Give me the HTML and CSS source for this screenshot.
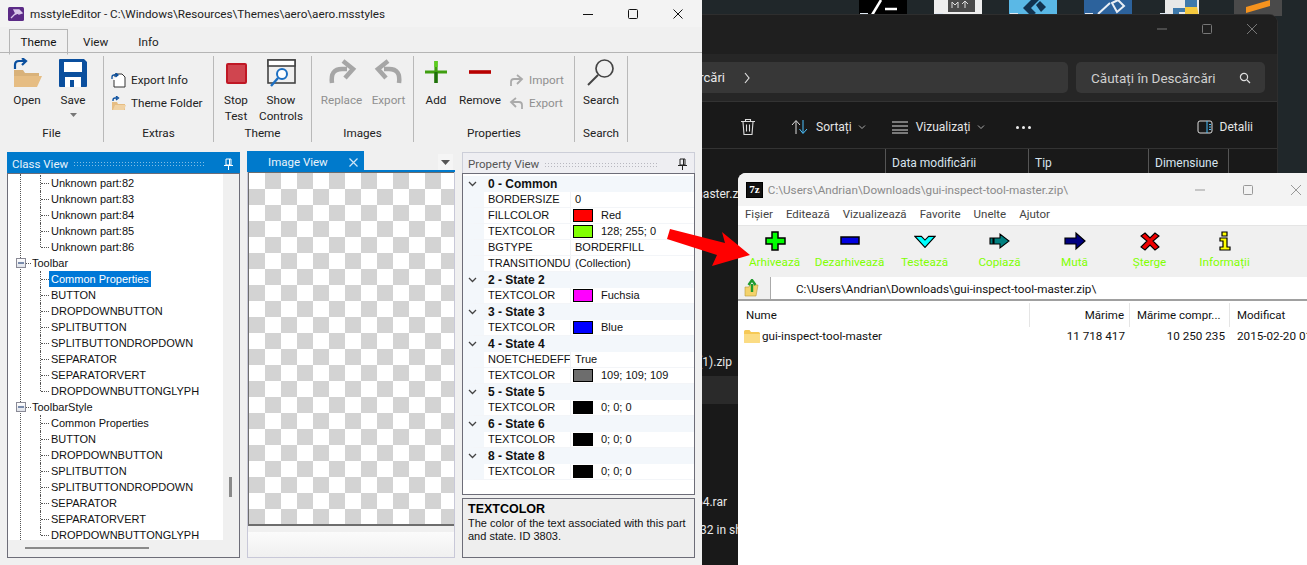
FILE: index.html
```html
<!DOCTYPE html>
<html lang="ro">
<head>
<meta charset="utf-8">
<title>msstyleEditor</title>
<link rel="stylesheet" href="styles.css">
</head>
<body>
<div class="desktop">
  <div class="shortcuts">
    <svg class="tile" viewBox="0 0 48 16"><rect width="48" height="16" fill="#000"/><path d="M13 15 22 0" stroke="#fff" stroke-width="2.500"/><path d="M26 9h12" stroke="#fff" stroke-width="2.500"/><rect x="1" y="13" width="8" height="3" fill="#dfe8f2"/></svg>
    <svg class="tile" viewBox="0 0 48 16"><rect width="48" height="16" fill="#eee"/><rect x="14" y="0" width="27" height="12" fill="#4a4a4a"/><path d="M18 8V2l3 3 3-3v6M31 8V2M28 4l3-3 3 3" stroke="#ddd" fill="none"/><rect x="1" y="13" width="8" height="3" fill="#dfe8f2"/></svg>
    <svg class="tile" viewBox="0 0 48 16"><rect width="48" height="16" fill="#5ab8e6"/><path d="M14 8l8-8h8l-8 8 5 5-5 3z" fill="#12324e"/><path d="M27 5l4-4 6 6-5 5z" fill="#12324e"/><rect x="1" y="13" width="8" height="3" fill="#dfe8f2"/></svg>
    <svg class="tile" viewBox="0 0 48 16"><rect width="48" height="16" fill="#2c629c"/><path d="M14 14 26 3M28 3l6-3 6 6-7 6z" stroke="#e8eef5" stroke-width="2" fill="none"/><rect x="1" y="13" width="8" height="3" fill="#dfe8f2"/></svg>
    <svg class="tile" viewBox="0 0 48 16"><rect x="6" width="34" height="16" fill="#e8e8e8"/><path d="M14 16V8h12V0h12v8l-4 4H20v4z" fill="#3e79ab"/><path d="M26 16h14l-2-9H26z" fill="#f5c93e"/><rect x="1" y="13" width="8" height="3" fill="#dfe8f2"/></svg>
    <svg class="tile" viewBox="0 0 48 16"><rect width="48" height="16" fill="#4a4a4a"/><path d="M12 7 36 0v6L12 13z" fill="#f5931e"/><path d="M12 14h18v2H12z" fill="#f5931e"/></svg>
  </div>

  <section class="explorer">
    <div class="ex-title">
      <svg class="ex-ctl" viewBox="0 0 12 12"><path d="M1 6h10" stroke="#777"/></svg>
      <svg class="ex-ctl" viewBox="0 0 12 12"><rect x="1.500" y="1.500" width="9" height="9" rx="1" fill="none" stroke="#777"/></svg>
      <svg class="ex-ctl" viewBox="0 0 12 12"><path d="M1 1l10 10M11 1 1 11" stroke="#777"/></svg>
    </div>
    <div class="ex-address">
      <div class="ex-path"><span>Descărcări</span><svg class="ex-chev" viewBox="0 0 8 12"><path d="M2 1l4 5-4 5" stroke="#ddd" fill="none" stroke-width="1.200"/></svg></div>
      <div class="ex-search"><span>Căutați în Descărcări</span><svg class="ex-glass" viewBox="0 0 12 12"><circle cx="5" cy="5" r="3.600" fill="none" stroke="#ddd" stroke-width="1.200"/><path d="M8 8l3 3" stroke="#ddd" stroke-width="1.300"/></svg></div>
    </div>
    <div class="ex-tools">
      <svg class="ex-trash" viewBox="0 0 16 18"><path d="M1 3.500h14M5.500 3V1.500h5V3M3 4l1 12.500h8L13 4M6.500 6.500v7M9.500 6.500v7" stroke="#ddd" fill="none" stroke-width="1.100"/></svg>
      <span class="ex-sep"></span>
      <svg class="ex-ico" viewBox="0 0 18 16"><path d="M5 15V2M1 6l4-4.500L9 6" stroke="#ddd" fill="none"/><path d="M12 1v13M8.500 10l3.500 4.500L16 10" stroke="#4cc2ff" fill="none"/></svg>
      <span class="ex-label">Sortați</span><svg class="ex-small" viewBox="0 0 8 6"><path d="M1 1.500l3 3 3-3" stroke="#aaa" fill="none"/></svg>
      <svg class="ex-ico ex-ico-view" viewBox="0 0 18 14"><path d="M1 2h16M1 6h16M1 10h16M1 13h16" stroke="#ddd"/></svg>
      <span class="ex-label">Vizualizați</span><svg class="ex-small" viewBox="0 0 8 6"><path d="M1 1.500l3 3 3-3" stroke="#aaa" fill="none"/></svg>
      <span class="ex-sep ex-sep-2"></span>
      <span class="ex-dots"><i></i><i></i><i></i></span>
      <svg class="ex-ico ex-ico-det" viewBox="0 0 16 14"><rect x="1" y="1" width="14" height="12" rx="2" fill="none" stroke="#ddd"/><path d="M10 1v12M12 4.500h2M12 7h2M12 9.500h2" stroke="#4cc2ff"/></svg>
      <span class="ex-label">Detalii</span>
    </div>
    <div class="ex-head">
      <span class="ex-col ex-col-date">Data modificării</span>
      <span class="ex-col ex-col-type">Tip</span>
      <span class="ex-col ex-col-size">Dimensiune</span>
      <span class="ex-col ex-col-end"></span>
    </div>
    <div class="ex-files">
      <div class="file end-far">gui-inspect-tool-master.zip</div>
      <div class="file"></div><div class="file"></div><div class="file"></div><div class="file"></div><div class="file"></div>
      <div class="file end-a">gui-inspect-tool-master (1).zip</div>
      <div class="file file-sel"></div>
      <div class="file"></div><div class="file"></div><div class="file"></div>
      <div class="file end-b">winrar-x64.rar</div>
      <div class="file end-c">Microsoft Visual C++ 32 in shell</div>
    </div>
  </section>

  <section class="zip">
    <header class="zip-title">
      <span class="zip-logo">7z</span>
      <span class="zip-name">C:\Users\Andrian\Downloads\gui-inspect-tool-master.zip\</span>
      <svg class="zip-ctl" viewBox="0 0 12 12"><path d="M1 6h10" stroke="#999"/></svg>
      <svg class="zip-ctl" viewBox="0 0 12 12"><rect x="1.500" y="1.500" width="9" height="9" rx="1" fill="none" stroke="#999"/></svg>
      <svg class="zip-ctl" viewBox="0 0 12 12"><path d="M1 1l10 10M11 1 1 11" stroke="#999"/></svg>
    </header>
    <nav class="zip-menu"><span>Fișier</span><span>Editează</span><span>Vizualizează</span><span>Favorite</span><span>Unelte</span><span>Ajutor</span></nav>
    <div class="zip-tools">
      <div class="zbtn"><svg class="zicon" viewBox="0 0 22 20"><path d="M8 1h6v6h7v6h-7v6H8v-6H2V7h6z" fill="#00ff00" stroke="#000" stroke-width="1.500"/></svg><span>Arhivează</span></div>
      <div class="zbtn"><svg class="zicon" viewBox="0 0 22 20"><rect x="2" y="6" width="18" height="7" fill="#0000e0" stroke="#000" stroke-width="1.500"/></svg><span>Dezarhivează</span></div>
      <div class="zbtn"><svg class="zicon" viewBox="0 0 24 20"><path d="M1 5h7l4 4 4-4h7L12 17z" fill="#00ffff" stroke="#000" stroke-width="1.200"/></svg><span>Testează</span></div>
      <div class="zbtn"><svg class="zicon" viewBox="0 0 22 20"><path d="M1 7h3v6H1zM5 7h6V3l9 7-9 7v-4H5z" fill="#008080" stroke="#000" stroke-width="1.100"/></svg><span>Copiază</span></div>
      <div class="zbtn"><svg class="zicon" viewBox="0 0 22 20"><path d="M1 7h11V2l9 8-9 8v-5H1z" fill="#000080" stroke="#000" stroke-width="1.200"/></svg><span>Mută</span></div>
      <div class="zbtn"><svg class="zicon" viewBox="0 0 22 20"><path d="M6 2l5 5 5-5 4 3-6 5 6 6-4 3-5-5-5 5-4-3 6-6-6-5z" fill="#f00000" stroke="#000" stroke-width="1.100"/></svg><span>Șterge</span></div>
      <div class="zbtn"><svg class="zicon" viewBox="0 0 22 20"><path d="M8 1h5v4H8zM6 7h7v9h3v3H6v-3h3v-6H6z" fill="#ffff00" stroke="#000" stroke-width="1.200"/></svg><span>Informații</span></div>
    </div>
    <div class="zip-addr">
      <svg class="zip-up" viewBox="0 0 16 18"><path d="M1 8h4l1-2h8l-2 11H1z" fill="#f3d26b" stroke="#b89a3a" stroke-width=".6"/><path d="M8 13V5M4.500 6 8 1l3.500 5" stroke="#1f9a2e" stroke-width="2.400" fill="none"/></svg>
      <div class="zip-field">C:\Users\Andrian\Downloads\gui-inspect-tool-master.zip\</div>
    </div>
    <div class="zip-head">
      <span class="zc zc-name">Nume</span>
      <span class="zc zc-size">Mărime</span>
      <span class="zc zc-comp">Mărime compr...</span>
      <span class="zc zc-date">Modificat</span>
    </div>
    <div class="zip-row">
      <span class="zr-name"><svg class="zr-folder" viewBox="0 0 16 14"><path d="M0 2.500Q0 1 1.500 1h4L7 3h7.500Q16 3 16 4.500v8Q16 14 14.500 14h-13Q0 14 0 12.500z" fill="#f6c956"/><path d="M0 5h16v7.500Q16 14 14.500 14h-13Q0 14 0 12.500z" fill="#fbdc84"/></svg>gui-inspect-tool-master</span>
      <span class="zr-size">11 718 417</span>
      <span class="zr-comp">10 250 235</span>
      <span class="zr-date">2015-02-20 01:37</span>
    </div>
  </section>

  <section class="editor">
    <header class="ed-title">
      <svg class="ed-logo" viewBox="0 0 16 14"><rect width="16" height="14" rx="1.500" fill="#5b2a86"/><path d="M3 11 8 6M6 3h5l3 3-3 1-2-1-1 1z" stroke="#d9c8ea" fill="#d9c8ea" stroke-width="1.300"/></svg>
      <span class="ed-name">msstyleEditor - C:\Windows\Resources\Themes\aero\aero.msstyles</span>
      <svg class="ed-ctl" viewBox="0 0 12 12"><path d="M1 6.500h10" stroke="#111"/></svg>
      <svg class="ed-ctl" viewBox="0 0 12 12"><rect x="1.500" y="1.500" width="9" height="9" rx="1" fill="none" stroke="#111"/></svg>
      <svg class="ed-ctl" viewBox="0 0 12 12"><path d="M1.500 1.500l9 9M10.500 1.500l-9 9" stroke="#111"/></svg>
    </header>
    <nav class="rb-tabs"><span class="rb-tab rb-tab-on">Theme</span><span class="rb-tab">View</span><span class="rb-tab">Info</span></nav>
    <div class="ribbon">
      <div class="group g-file">
        <div class="group-items">
          <div class="big b-open"><svg class="bi" viewBox="0 0 30 30"><path d="M2 12h9l2 3h14v4H2z" fill="#d9b27a"/><path d="M2 29V18h28l-5 11z" fill="#e6bd83"/><path d="M3 11V7q0-4 4-4h6M10 0l4 3-4 4" stroke="#0a4f9e" stroke-width="2.200" fill="none"/></svg><span>Open</span></div>
          <div class="big b-save"><svg class="bi" viewBox="0 0 30 30"><path d="M1 2q0-1 1-1h24l3 3v24q0 1-1 1H2q-1 0-1-1z" fill="#0a4f9e"/><rect x="6" y="4" width="18" height="10" fill="#fff"/><rect x="7" y="19" width="16" height="10" fill="#fff"/><rect x="12" y="22" width="4" height="7" fill="#0a4f9e"/></svg><span>Save</span><svg class="caret" viewBox="0 0 7 4"><path d="M0 0h7L3.500 4z" fill="#777"/></svg></div>
        </div>
        <div class="group-title">File</div>
      </div>
      <div class="group g-extras">
        <div class="group-items">
          <div class="small-stack">
            <div class="small"><svg class="si" viewBox="0 0 15 15"><path d="M4 4V1h7l3 3v10H3V7" stroke="#333" fill="#fff"/><path d="M1 6V4q0-2 2-2h3M4.500 0 7 2 4.500 4" stroke="#0a4f9e" stroke-width="1.300" fill="none"/></svg>Export Info</div>
            <div class="small"><svg class="si" viewBox="0 0 15 15"><path d="M1 6h5l1 2h7v6H1z" fill="#e6bd83"/><path d="M2 14l2-5h11l-2 5z" fill="#f0d2a4"/><path d="M2 5V4q0-2 2-2h2M5 0l2.500 2L5 4" stroke="#0a4f9e" stroke-width="1.300" fill="none"/></svg>Theme Folder</div>
          </div>
        </div>
        <div class="group-title">Extras</div>
      </div>
      <div class="group g-theme">
        <div class="group-items">
          <div class="big b-stop"><svg class="bi" viewBox="0 0 30 30"><rect x="6" y="6" width="19" height="19" rx="1" fill="#d0454f" stroke="#c01825" stroke-width="2"/></svg><span>Stop<br>Test</span></div>
          <div class="big b-show"><svg class="bi" viewBox="0 0 30 30"><rect x="2" y="2" width="27" height="23" fill="#f0f0f0" stroke="#444" stroke-width="1.600"/><rect x="2" y="2" width="27" height="6" fill="#fff" stroke="#444" stroke-width="1.600"/><circle cx="16" cy="16" r="5" fill="#fff" stroke="#1c6fc2" stroke-width="2"/><path d="M12 20l-7 8" stroke="#1c6fc2" stroke-width="2.400"/></svg><span>Show<br>Controls</span></div>
        </div>
        <div class="group-title">Theme</div>
      </div>
      <div class="group g-images">
        <div class="group-items">
          <div class="big b-replace off"><svg class="bi" viewBox="0 0 30 30"><path d="M5 25q-2-14 10-14h5M16 3l10 8-8 9" stroke="#a6a6a6" stroke-width="4.500" fill="none"/></svg><span>Replace</span></div>
          <div class="big b-export off"><svg class="bi" viewBox="0 0 30 30"><path d="M25 25q2-14-10-14h-5M14 3 4 11l8 9" stroke="#a6a6a6" stroke-width="4.500" fill="none"/></svg><span>Export</span></div>
        </div>
        <div class="group-title">Images</div>
      </div>
      <div class="group g-props">
        <div class="group-items">
          <div class="big b-add"><svg class="bi" viewBox="0 0 30 30"><path d="M4 14h22M15 3v22" stroke="#3f9e10" stroke-width="3.200"/><path d="M15 14v11" stroke="#1f6f0c" stroke-width="3.200"/><path d="M15 3v6" stroke="#5ccf1c" stroke-width="3.200"/></svg><span>Add</span></div>
          <div class="big b-remove"><svg class="bi" viewBox="0 0 30 30"><path d="M4 14h22" stroke="#b80000" stroke-width="3.600"/></svg><span>Remove</span></div>
          <div class="small-stack off">
            <div class="small"><svg class="si si-g" viewBox="0 0 15 15"><path d="M2 13V9q0-3 3-3h8M8 2l5 4-5 5" stroke="#aaa" stroke-width="1.800" fill="none"/></svg>Import</div>
            <div class="small"><svg class="si si-g" viewBox="0 0 15 15"><path d="M13 13V9q0-3-3-3H3M7 2 2 6l5 5" stroke="#aaa" stroke-width="1.800" fill="none"/></svg>Export</div>
          </div>
        </div>
        <div class="group-title">Properties</div>
      </div>
      <div class="group g-search">
        <div class="group-items">
          <div class="big b-search"><svg class="bi" viewBox="0 0 30 30"><circle cx="18.500" cy="10.500" r="8.500" fill="none" stroke="#444" stroke-width="1.700"/><path d="M12 17 2 27" stroke="#444" stroke-width="2"/></svg><span>Search</span></div>
        </div>
        <div class="group-title">Search</div>
      </div>
    </div>

    <div class="workspace">
      <div class="pane pane-class">
        <div class="pane-head head-on"><span>Class View</span><i class="grip"></i><svg class="pin" viewBox="0 0 9 12"><path d="M2 1h5v6H2zM0 7.500h9M4.500 8v4M5.500 1v6" stroke="#fff" fill="none"/></svg></div>
        <div class="pane-body class-body">
          <div class="tree">
            <div class="t-leaf">Unknown part:82</div>
            <div class="t-leaf">Unknown part:83</div>
            <div class="t-leaf">Unknown part:84</div>
            <div class="t-leaf">Unknown part:85</div>
            <div class="t-leaf t-last">Unknown part:86</div>
            <div class="t-root"><i class="box"></i>Toolbar</div>
            <div class="t-leaf"><span class="t-sel">Common Properties</span></div>
            <div class="t-leaf">BUTTON</div>
            <div class="t-leaf">DROPDOWNBUTTON</div>
            <div class="t-leaf">SPLITBUTTON</div>
            <div class="t-leaf">SPLITBUTTONDROPDOWN</div>
            <div class="t-leaf">SEPARATOR</div>
            <div class="t-leaf">SEPARATORVERT</div>
            <div class="t-leaf t-last">DROPDOWNBUTTONGLYPH</div>
            <div class="t-root"><i class="box"></i>ToolbarStyle</div>
            <div class="t-leaf">Common Properties</div>
            <div class="t-leaf">BUTTON</div>
            <div class="t-leaf">DROPDOWNBUTTON</div>
            <div class="t-leaf">SPLITBUTTON</div>
            <div class="t-leaf">SPLITBUTTONDROPDOWN</div>
            <div class="t-leaf">SEPARATOR</div>
            <div class="t-leaf">SEPARATORVERT</div>
            <div class="t-leaf t-last">DROPDOWNBUTTONGLYPH</div>
          </div>
          <div class="vbar"><i class="vthumb"></i></div>
          <div class="hbar"><i class="hthumb"></i></div>
        </div>
      </div>

      <div class="pane pane-image">
        <div class="doc-tabs">
          <span class="doc-tab">Image View<svg class="doc-x" viewBox="0 0 9 9"><path d="M.5.500l8 8M8.500.500l-8 8" stroke="#cfe6f7" stroke-width="1.200"/></svg></span>
          <span class="doc-drop"><svg viewBox="0 0 9 5"><path d="M0 0h9L4.500 5z" fill="#555"/></svg></span>
        </div>
        <div class="doc-frame">
          <div class="checker"></div>
          <div class="doc-foot"></div>
        </div>
      </div>

      <div class="pane pane-prop">
        <div class="pane-head head-off"><span>Property View</span><i class="grip"></i><svg class="pin" viewBox="0 0 9 12"><path d="M2 1h5v6H2zM0 7.500h9M4.500 8v4M5.500 1v6" stroke="#222" fill="none"/></svg></div>
        <div class="pane-body prop-grid">
          <div class="p-group"><svg class="p-chev" viewBox="0 0 9 6"><path d="M1 1l3.500 3.500L8 1" stroke="#444" stroke-width="1.300" fill="none"/></svg>0 - Common</div>
          <div class="p-row"><span class="p-name">BORDERSIZE</span><span class="p-val">0</span></div>
          <div class="p-row"><span class="p-name">FILLCOLOR</span><span class="p-val"><i class="sw sw-red"></i>Red</span></div>
          <div class="p-row"><span class="p-name">TEXTCOLOR</span><span class="p-val"><i class="sw sw-lime"></i>128; 255; 0</span></div>
          <div class="p-row"><span class="p-name">BGTYPE</span><span class="p-val">BORDERFILL</span></div>
          <div class="p-row"><span class="p-name">TRANSITIONDURATIONS</span><span class="p-val">(Collection)</span></div>
          <div class="p-group"><svg class="p-chev" viewBox="0 0 9 6"><path d="M1 1l3.500 3.500L8 1" stroke="#444" stroke-width="1.300" fill="none"/></svg>2 - State 2</div>
          <div class="p-row"><span class="p-name">TEXTCOLOR</span><span class="p-val"><i class="sw sw-fuchsia"></i>Fuchsia</span></div>
          <div class="p-group"><svg class="p-chev" viewBox="0 0 9 6"><path d="M1 1l3.500 3.500L8 1" stroke="#444" stroke-width="1.300" fill="none"/></svg>3 - State 3</div>
          <div class="p-row"><span class="p-name">TEXTCOLOR</span><span class="p-val"><i class="sw sw-blue"></i>Blue</span></div>
          <div class="p-group"><svg class="p-chev" viewBox="0 0 9 6"><path d="M1 1l3.500 3.500L8 1" stroke="#444" stroke-width="1.300" fill="none"/></svg>4 - State 4</div>
          <div class="p-row"><span class="p-name">NOETCHEDEFFECT</span><span class="p-val">True</span></div>
          <div class="p-row"><span class="p-name">TEXTCOLOR</span><span class="p-val"><i class="sw sw-gray"></i>109; 109; 109</span></div>
          <div class="p-group"><svg class="p-chev" viewBox="0 0 9 6"><path d="M1 1l3.500 3.500L8 1" stroke="#444" stroke-width="1.300" fill="none"/></svg>5 - State 5</div>
          <div class="p-row"><span class="p-name">TEXTCOLOR</span><span class="p-val"><i class="sw sw-black"></i>0; 0; 0</span></div>
          <div class="p-group"><svg class="p-chev" viewBox="0 0 9 6"><path d="M1 1l3.500 3.500L8 1" stroke="#444" stroke-width="1.300" fill="none"/></svg>6 - State 6</div>
          <div class="p-row"><span class="p-name">TEXTCOLOR</span><span class="p-val"><i class="sw sw-black"></i>0; 0; 0</span></div>
          <div class="p-group"><svg class="p-chev" viewBox="0 0 9 6"><path d="M1 1l3.500 3.500L8 1" stroke="#444" stroke-width="1.300" fill="none"/></svg>8 - State 8</div>
          <div class="p-row"><span class="p-name">TEXTCOLOR</span><span class="p-val"><i class="sw sw-black"></i>0; 0; 0</span></div>
        </div>
        <div class="p-desc">
          <strong>TEXTCOLOR</strong>
          <p>The color of the text associated with this part and state. ID 3803.</p>
        </div>
      </div>
    </div>
  </section>

  <svg class="red-arrow" viewBox="0 0 100 50"><polygon points="6,1 61,15 58,4 86,27 48,38 53,27 3,11" fill="#ff0000"/></svg>
</div>
</body>
</html>
```
FILE: styles.css
```css
* { box-sizing: border-box; }
html, body { margin: 0; padding: 0; }
body { font-family: Roboto, "Liberation Sans", sans-serif; font-size: 11.700px; color: #000; }
i { display: block; }
svg { display: block; flex: none; }
.desktop { position: relative; width: 1307px; height: 565px; overflow: hidden; background: #20272a; }

/* desktop shortcuts */
.shortcuts { position: absolute; left: 859px; top: 0; display: flex; gap: 27px; }
.tile { width: 48px; height: 16px; }

/* explorer */
.explorer { position: absolute; left: 400px; top: 15px; width: 877px; height: 550px; background: #191919; border-radius: 8px 8px 0 0; color: #e6e6e6; display: flex; flex-direction: column; box-shadow: 0 0 0 1px #2e2e2e; }
.ex-title { height: 39px; background: #1f1f1f; border-radius: 8px 8px 0 0; display: flex; justify-content: flex-end; align-items: center; gap: 33px; padding: 0 19px 11px 0; }
.ex-ctl { width: 12px; height: 12px; }
.ex-address { height: 48px; background: #262626; border-bottom: 1px solid #333; display: flex; gap: 8px; padding: 8px 12px 8px 20px; }
.ex-path { flex: 1; background: #373737; border-radius: 5px; display: flex; justify-content: flex-end; align-items: center; padding-right: 317px; font-size: 13px; gap: 18px; }
.ex-chev { width: 8px; height: 12px; }
.ex-search { width: 189px; background: #373737; border-radius: 5px; display: flex; align-items: center; justify-content: space-between; padding: 0 14px 0 15px; font-size: 13.500px; color: #cfcfcf; }
.ex-glass { width: 12px; height: 12px; }
.ex-tools { height: 47px; border-bottom: 1px solid #333; display: flex; align-items: center; padding: 4px 24px 0 340px; font-size: 12px; }
.ex-trash { width: 16px; height: 18px; }
.ex-sep { width: 1px; height: 36px; background: #333; margin: 0 16px 0 19px; }
.ex-sep-2 { margin: 0 16px 0 15px; }
.ex-ico { width: 18px; height: 16px; margin-right: 7px; }
.ex-ico-view { height: 14px; margin-left: 25px; margin-right: 7px; }
.ex-ico-det { width: 16px; height: 14px; margin-right: 7px; margin-left: 166px; }
.ex-small { width: 8px; height: 6px; margin-left: 6px; }
.ex-dots { display: flex; gap: 3px; }
.ex-dots i { width: 3px; height: 3px; background: #eee; border-radius: 50%; }
.ex-head { height: 26px; display: flex; padding-left: 485px; font-size: 12px; color: #d8e4ee; }
.ex-col { border-left: 1px solid #555; padding-left: 6px; line-height: 28px; }
.ex-col-date { width: 143px; }
.ex-col-type { width: 120px; }
.ex-col-size { width: 80px; }
.ex-col-end { width: 40px; }
.ex-files { width: 360px; padding-top: 5px; }
.file { height: 28px; line-height: 28px; white-space: nowrap; display: flex; justify-content: flex-end; font-size: 12px; color: #e8e8e8; }
.file-sel { background: #2a2a2a; }
.end-far { padding-right: 12px; }
.end-a { padding-right: 28px; }
.end-b { padding-right: 33px; }
.end-c { padding-right: 6px; }

/* 7-zip */
.zip { position: absolute; left: 738px; top: 173px; width: 600px; height: 392px; background: #fff; border-radius: 8px 0 0 0; display: flex; flex-direction: column; overflow: hidden; font-size: 11.500px; }
.zip-title { height: 33px; background: #f3f3f3; display: flex; align-items: center; padding-left: 9px; color: #8a8a8a; font-size: 11.700px; }
.zip-logo { width: 15px; height: 14px; background: #111; color: #fff; font-family: "Liberation Serif", serif; font-weight: 700; font-size: 11px; line-height: 13px; text-align: center; outline: 1px solid #000; }
.zip-name { margin-left: 6px; width: 432px; }
.zip-ctl { width: 12px; height: 12px; margin-right: 36px; }
.zip-menu { height: 19px; background: #fff; display: flex; gap: 13px; padding-left: 7px; color: #444; line-height: 16px; }
.zip-tools { height: 52px; background: #f0f0f0; display: flex; align-items: flex-start; border-top: 1px solid #e5e5e5; }
.zbtn { width: 75px; display: flex; flex-direction: column; align-items: center; color: #80ff00; padding-top: 5px; font-size: 11.700px; }
.zbtn:first-child { margin-left: -1px; }
.zicon { width: 22px; height: 20px; }
.zbtn span { margin-top: 3px; line-height: 16px; white-space: nowrap; }
.zip-addr { height: 22px; display: flex; align-items: center; padding-left: 6px; background: #f0f0f0; }
.zip-up { width: 16px; height: 18px; margin-right: 10px; }
.zip-field { flex: 1; height: 22px; background: #fff; border-left: 1px solid #aaa; padding-left: 25px; line-height: 24px; color: #111; font-size: 11.700px; }
.zip-head { height: 30px; border-top: 2px solid #a0a0a0; display: flex; line-height: 28px; color: #111; }
.zc { border-right: 1px solid #e5e5e5; height: 24px; margin-top: 2px; line-height: 24px; }
.zc-name { width: 292px; padding-left: 8px; }
.zc-size { width: 100px; text-align: right; padding-right: 5px; }
.zc-comp { width: 100px; padding-left: 7px; white-space: nowrap; }
.zc-date { width: 100px; padding-left: 7px; border: 0; }
.zip-row { display: flex; height: 18px; line-height: 18px; margin-top: -2px; color: #111; white-space: nowrap; font-size: 11.700px; }
.zr-name { width: 292px; padding-left: 6px; display: flex; align-items: center; gap: 2px; }
.zr-folder { width: 16px; height: 14px; }
.zr-size { width: 100px; text-align: right; padding-right: 5px; }
.zr-comp { width: 100px; text-align: right; padding-right: 5px; }
.zr-date { padding-left: 7px; }

/* editor */
.editor { position: absolute; left: 0; top: 0; width: 702px; height: 565px; background: #f0f0f0; display: flex; flex-direction: column; }
.ed-title { height: 27px; background: #f3f3f3; display: flex; align-items: center; padding-left: 8px; }
.ed-logo { width: 16px; height: 14px; }
.ed-name { margin-left: 6px; width: 552px; flex: none; color: #222; white-space: nowrap; }
.ed-ctl { width: 12px; height: 12px; margin-right: 33px; }
.rb-tabs { height: 26px; display: flex; padding-left: 9px; border-bottom: 1px solid #b5b5b5; }
.rb-tab { padding: 0 15px; line-height: 30px; height: 26px; color: #222; }
.rb-tab-on { width: 59px; padding: 0; text-align: center; margin-top: 2px; line-height: 25px; border: 1px solid #b5b5b5; border-bottom: 1px solid #f0f0f0; color: #111; }
.ribbon { height: 92px; display: flex; padding-top: 3px; }
.group { border-right: 1px solid #b9b9b9; display: flex; flex-direction: column; height: 86px; }
.group-items { height: 71px; display: flex; }
.group-title { height: 13px; line-height: 13px; text-align: center; color: #222; }
.g-file { width: 104px; }
.g-extras { width: 110px; }
.g-theme { width: 98px; }
.g-images { width: 102px; }
.g-props { width: 161px; }
.g-search { width: 53px; }
.big { display: flex; flex-direction: column; align-items: center; color: #222; line-height: 16px; text-align: center; white-space: nowrap; }
.bi { width: 30px; height: 30px; margin: 2px 0 4px; }
.caret { width: 7px; height: 4px; margin-top: 5px; }
.b-open { width: 46px; margin-left: 4px; }
.b-save { width: 46px; }
.b-stop { width: 44px; }
.b-show { width: 46px; }
.b-replace { width: 47px; margin-left: 6px; }
.b-export { width: 47px; }
.b-add { width: 44px; }
.b-remove { width: 44px; }
.off, .off .small { color: #8f8f8f; }
.b-search { width: 52px; }
.small-stack { display: flex; flex-direction: column; gap: 7px; padding-top: 16px; }
.small { display: flex; align-items: center; gap: 5px; height: 16px; color: #222; white-space: nowrap; }
.si { width: 15px; height: 15px; }
.g-extras .small-stack { padding-left: 7px; }
.g-props .small-stack { padding-left: 7px; }

.workspace { flex: 1; display: flex; gap: 7px; padding: 7px; min-height: 0; }
.pane { display: flex; flex-direction: column; width: 233px; }
.pane-image { width: 208px; margin-top: -1px; }
.pane-head { height: 21px; display: flex; align-items: center; padding: 2px 7px 0 5px; flex: none; font-size: 11.500px; }
.head-on { background: #007acc; color: #e8f3fb; }
.head-off { background: #eeeef2; border: 1px solid #ccced8; border-bottom: 0; color: #555; }
.grip { flex: 1; height: 5px; margin: 0 19px 0 5px; background-image: radial-gradient(circle, rgba(255,255,255,.5) .7px, transparent .8px); background-size: 3px 3px; }
.head-off .grip { background-image: radial-gradient(circle, #b8b8c0 .7px, transparent .8px); }
.pin { width: 9px; height: 12px; }
.pane-body { border: 1px solid #6d6d78; min-height: 0; }
.class-body { flex: 1; display: grid; grid-template-columns: 215px 1fr; grid-template-rows: 1fr 17px; background: #f0f0f0; }

.tree { background: #fff; position: relative; overflow: hidden; font-family: "Liberation Sans", sans-serif; font-size: 11px; padding-top: 1px; }
.tree::before { content: ""; position: absolute; left: 12px; top: 0; bottom: 0; border-left: 1px dotted #555; }
.t-leaf, .t-root { height: 16px; line-height: 16px; white-space: nowrap; color: #111; position: relative; }
.t-leaf { padding-left: 43px; }
.t-leaf::before { content: ""; position: absolute; left: 32px; top: 0; bottom: 0; border-left: 1px dotted #555; }
.t-leaf::after { content: ""; position: absolute; left: 33px; top: 8px; width: 8px; border-top: 1px dotted #555; }
.t-last::before { bottom: 8px; }
.t-root { padding-left: 24px; }
.t-root::after { content: ""; position: absolute; left: 17px; top: 8px; width: 6px; border-top: 1px dotted #555; }
.box { position: absolute; z-index: 1; left: 8px; top: 3px; width: 10px; height: 10px; border: 1px solid #8a8a96; background: linear-gradient(#fff, #dfe3ea); }
.box::after { content: ""; position: absolute; left: 1px; right: 1px; top: 3px; height: 2px; background: #2d4a7c; transform: scaleY(.6); }
.t-sel { background: #0078d7; color: #fff; margin-left: -2px; padding: 0 2px; display: inline-block; height: 16px; }
.vbar { position: relative; }
.vthumb { position: absolute; left: 6px; bottom: 43px; width: 3px; height: 20px; background: #8a8a8a; }
.hbar { grid-column: 1 / 3; position: relative; }
.hthumb { position: absolute; left: 17px; top: 7px; width: 124px; height: 2px; background: #8a8a8a; }

.doc-tabs { height: 21px; display: flex; justify-content: space-between; border-bottom: 2px solid #007acc; flex: none; font-size: 11.500px; }
.doc-tab { width: 117px; background: #007acc; color: #e8f3fb; padding: 3px 0 0 21px; display: flex; align-items: center; gap: 21px; }
.doc-x { width: 9px; height: 9px; }
.doc-drop { width: 15px; height: 16px; background: #f5f5f5; margin: 3px 2px 0 0; display: flex; align-items: center; justify-content: center; }
.doc-drop svg { width: 9px; height: 5px; }
.doc-frame { flex: 1; border: 1px solid #c8c8d8; border-top: 0; display: flex; flex-direction: column; }
.checker { height: 354px; border: 1px solid #6d6d6d; border-width: 1px 0 2px 1px; background-color: #fff; background-image: conic-gradient(#d3d3d3 25%, #fff 0 50%, #d3d3d3 0 75%, #fff 0); background-size: 32px 32px; }
.doc-foot { flex: 1; margin-top: 6px; background: linear-gradient(#fbfbfb, #f0f0f0); }

.prop-grid { height: 322px; flex: none; background: #fff; padding-top: 2px; overflow: hidden; font-family: "Liberation Sans", sans-serif; font-size: 11px; }
.p-group { height: 16px; line-height: 16px; font-weight: 700; font-size: 12px; color: #111; background: #f3f7fb; padding-left: 25px; position: relative; }
.p-chev { position: absolute; left: 5px; top: 5px; width: 9px; height: 6px; }
.p-row { height: 16px; line-height: 15px; display: flex; border-left: 21px solid #f3f7fb; border-bottom: 1px solid #f3f5f8; white-space: nowrap; color: #111; }
.p-name { width: 87px; padding-left: 4px; overflow: hidden; border-right: 1px solid #f0f2f5; }
.p-val { padding-left: 4px; display: flex; align-items: center; flex: 1; }
.sw { width: 20px; height: 13px; border: 1px solid #000; margin-right: 8px; margin-left: -2px; }
.sw-red { background: #f00; }
.sw-lime { background: #80ff00; }
.sw-fuchsia { background: #f0f; }
.sw-blue { background: #00f; }
.sw-gray { background: #6d6d6d; }
.sw-black { background: #000; }
.p-desc { flex: 1; margin-top: 3px; border: 1px solid #6d6d78; background: #eee; padding: 2px 5px; line-height: 13px; font-family: "Liberation Sans", sans-serif; }
.p-desc strong { display: block; line-height: 16px; font-size: 12.500px; }
.p-desc p { margin: 0; color: #111; font-size: 11px; }

.red-arrow { position: absolute; left: 664px; top: 228px; width: 100px; height: 50px; }
```
